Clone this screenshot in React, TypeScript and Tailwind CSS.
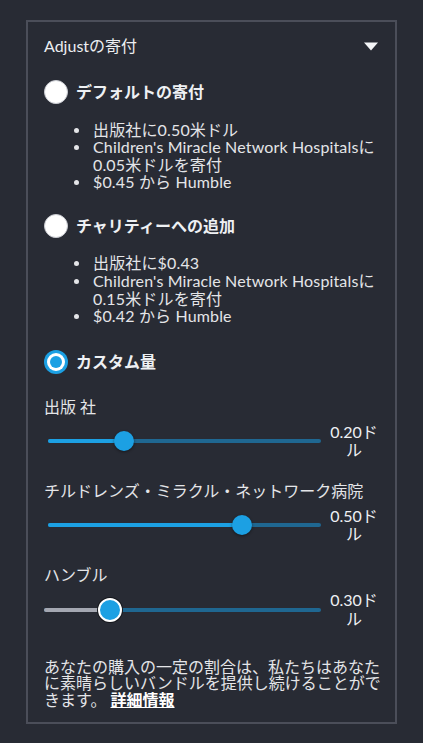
import { useState } from "react";

interface Option {
    key: string;
    label: string;
    bullets?: string[];
}

interface Split {
    label: string;
    value: string;
    pct: number;
}

const options: Option[] = [
    {
        key: "default",
        label: "デフォルトの寄付",
        bullets: [
            "出版社に0.50米ドル",
            "Children's Miracle Network Hospitalsに0.05米ドルを寄付",
            "$0.45 から Humble",
        ],
    },
    {
        key: "charity",
        label: "チャリティーへの追加",
        bullets: [
            "出版社に$0.43",
            "Children's Miracle Network Hospitalsに0.15米ドルを寄付",
            "$0.42 から Humble",
        ],
    },
    { key: "custom", label: "カスタム量" },
];

const splits: Split[] = [
    { label: "出版 社", value: "0.20ドル", pct: 28 },
    { label: "チルドレンズ・ミラクル・ネットワーク病院", value: "0.50ドル", pct: 71 },
];

function Radio({ checked }: { checked: boolean }) {
    if (checked) {
        return (
            <span className="w-6 h-6 rounded-full bg-[#1ca0e3] flex items-center justify-center shrink-0">
                <span className="w-[18px] h-[18px] rounded-full bg-white flex items-center justify-center">
                    <span className="w-3 h-3 rounded-full bg-[#1ca0e3]" />
                </span>
            </span>
        );
    }
    return <span className="w-6 h-6 rounded-full bg-white border border-[#c9cbd1] shrink-0" />;
}

function Slider({ split }: { split: Split }) {
    return (
        <div>
            <p className="text-[16px] leading-[20px] text-[#e4e5e8]">{split.label}</p>
            <div className="mt-[6px] flex items-center">
                <div className="relative flex-1 h-5 ml-1">
                    <div className="absolute left-0 right-0 top-[8px] h-1 rounded-full bg-[#1f6791]" />
                    <div
                        className="absolute left-0 top-[8px] h-1 rounded-full bg-[#1ca0e3]"
                        style={{ width: `${split.pct}%` }}
                    />
                    <div
                        className="absolute top-0 w-5 h-5 -ml-[10px] rounded-full bg-[#1ca0e3] shadow-[0_1px_3px_rgba(0,0,0,0.45)]"
                        style={{ left: `${split.pct}%` }}
                    />
                </div>
                <p className="w-[50px] ml-2 text-center text-[16px] leading-[18.3px] text-[#eef0f3]">
                    {split.value}
                </p>
            </div>
        </div>
    );
}

export default function App() {
    const [selected, setSelected] = useState("custom");

    return (
        <div className="min-h-[743px] bg-[#282b34] pt-5 px-[26px] font-['Lato','Noto_Sans_CJK_JP',sans-serif] text-[#e7e8eb]">
            <div className="border-2 border-[#4b4e59] px-4 pt-[14px] pb-[14px]">
                <div className="flex items-center justify-between h-5">
                    <span className="text-[16px] text-[#eceef1]">Adjustの寄付</span>
                    <svg width="14" height="9" viewBox="0 0 14 9" className="mr-[1px]">
                        <path d="M0 0.5h14L7 8.5z" fill="#f4f5f7" />
                    </svg>
                </div>

                {options.map((opt, i) => (
                    <div key={opt.key} className={i === 0 ? "mt-6" : i === 1 ? "mt-[23px]" : "mt-[25px]"}>
                        <button
                            type="button"
                            onClick={() => setSelected(opt.key)}
                            className="flex items-center gap-2 h-6"
                        >
                            <Radio checked={selected === opt.key} />
                            <span className="text-[16px] font-bold text-[#eef0f3]">{opt.label}</span>
                        </button>
                        {opt.bullets && (
                            <ul className="mt-[16.5px] pl-[49px] text-[16px] leading-[17.6px] tracking-[0.15px] text-[#e4e5e8]">
                                {opt.bullets.map((b) => (
                                    <li key={b} className="relative">
                                        <span className="absolute -left-[19px] top-[7px] w-[5px] h-[5px] rounded-full bg-[#e4e5e8]" />
                                        {b}
                                    </li>
                                ))}
                            </ul>
                        )}
                    </div>
                ))}

                <div className="mt-[23px] flex flex-col gap-[21.7px]">
                    {splits.map((s) => (
                        <Slider key={s.label} split={s} />
                    ))}
                    <div>
                        <p className="text-[16px] leading-[20px] text-[#e4e5e8]">ハンブル</p>
                        <div className="mt-[6px] flex items-center">
                            <div className="relative flex-1 h-5">
                                <div className="absolute left-0 right-0 top-[8px] h-1 rounded-full bg-[#1f6791]" />
                                <div className="absolute left-0 top-[8px] h-1 w-[24%] rounded-full bg-[#a4a7b1]" />
                                <div className="absolute left-[24%] -top-[2px] w-6 h-6 -ml-3 rounded-full bg-[#1ca0e3] border-2 border-white shadow-[0_0_0_1px_#15171c]" />
                            </div>
                            <p className="w-[50px] ml-2 text-center text-[16px] leading-[18.3px] text-[#eef0f3]">
                                0.30ドル
                            </p>
                        </div>
                    </div>
                </div>

                <p className="mt-[31px] -mr-2 text-[16px] leading-[16.5px] text-[#e4e5e8]">
                    あなたの購入の一定の割合は、私たちはあなたに素晴らしいバンドルを提供し続けることができます。{" "}
                    <a href="#" className="font-bold underline text-white">詳細情報</a>
                </p>
            </div>
        </div>
    );
}
